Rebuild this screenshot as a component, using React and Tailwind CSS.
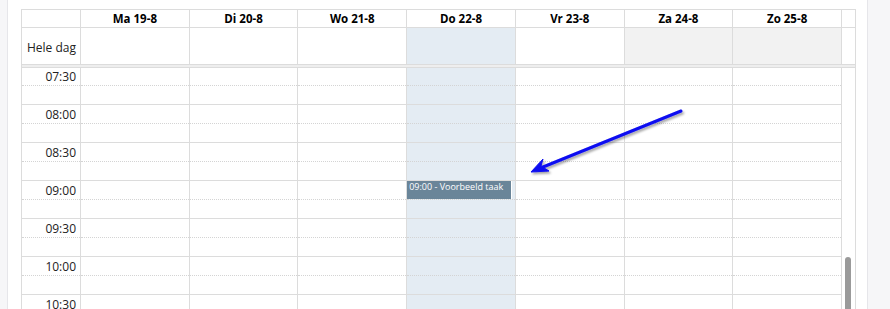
import React from 'react';

const days = ['Ma 19-8', 'Di 20-8', 'Wo 21-8', 'Do 22-8', 'Vr 23-8', 'Za 24-8', 'Zo 25-8'];
const slots = ['07:30', '08:00', '08:30', '09:00', '09:30', '10:00', '10:30', '11:00'];

function DayColumn({ index }) {
  const today = index === 3;
  return (
    <div className={`flex flex-col border-r border-[#dcdcdc] ${today ? 'bg-[#e4ecf3]' : ''}`}>
      {slots.map((s) => (
        <div key={s} className="relative h-[38px] shrink-0 border-b border-[#dcdcdc]">
          <div className="h-[19px] border-b border-dotted border-[#d4d4d4]" />
          {today && s === '09:00' && (
            <div className="absolute left-0 right-[3px] top-0 h-[18px] bg-[#6a8599] border-r border-white pl-[2px] text-[9px] leading-[12px] text-white">
              09:00 - Voorbeeld taak
            </div>
          )}
        </div>
      ))}
    </div>
  );
}

export default function App() {
  return (
    <div
      className="relative flex h-[309px] w-[890px] overflow-hidden bg-[#f6f6f8] text-[#222]"
      style={{ fontFamily: '"Open Sans", "Noto Sans", sans-serif' }}
    >
      <div className="w-2 border-r border-[#e6e6ea]" />
      <div className="w-[860px] border-r border-[#e6e6ea] bg-white pl-[13px] pt-[9px]">
        <div className="w-[835px] border-l border-r border-t border-[#dcdcdc]">
          {/* header */}
          <div className="grid grid-cols-[59px_repeat(7,1fr)_13px] border-b border-[#dcdcdc]">
            <div className="h-[17px] border-r border-[#dcdcdc]" />
            {days.map((d) => (
              <div
                key={d}
                className="flex h-[17px] items-center justify-center border-r border-[#dcdcdc] text-[11.5px] font-bold text-black"
              >
                {d}
              </div>
            ))}
            <div />
          </div>
          {/* all-day row */}
          <div className="grid grid-cols-[59px_repeat(7,1fr)_13px]">
            <div className="flex h-[36px] items-center justify-end border-r border-[#dcdcdc] pr-1 pt-[3px] text-[12px]">
              Hele dag
            </div>
            {days.map((d, i) => (
              <div
                key={d}
                className={`h-[36px] border-r border-[#dcdcdc] ${
                  i === 3 ? 'bg-[#e4ecf3]' : i >= 5 ? 'bg-[#f2f2f2]' : ''
                }`}
              />
            ))}
            <div />
          </div>
          <div className="h-[4px] border-y border-[#dcdcdc] bg-[#eeeeee]" />
          {/* time grid */}
          <div className="relative flex h-[241px] overflow-hidden">
            <div className="-mt-px grid flex-1 grid-cols-[59px_repeat(7,1fr)]">
              <div className="flex flex-col border-r border-[#dcdcdc]">
                {slots.map((s) => (
                  <div key={s} className="relative h-[38px] shrink-0 border-b border-[#dcdcdc]">
                    <div className="h-[19px] border-b border-dotted border-[#d4d4d4] pr-1 pt-[2px] text-right text-[12px] leading-[16px]">
                      {s}
                    </div>
                  </div>
                ))}
              </div>
              {days.map((d, i) => (
                <DayColumn key={d} index={i} />
              ))}
            </div>
            <div className="relative w-[13px]">
              <div className="absolute left-[3px] top-[189px] h-[80px] w-[6px] rounded-t-[3px] bg-[#9a9a9a]" />
            </div>
          </div>
        </div>
      </div>

      {/* annotation arrow */}
      <svg className="pointer-events-none absolute left-0 top-0" width="890" height="309">
        <defs>
          <filter id="sh" x="-20%" y="-20%" width="140%" height="140%">
            <feDropShadow dx="1.5" dy="2" stdDeviation="1.2" floodColor="#000" floodOpacity="0.35" />
          </filter>
        </defs>
        <g filter="url(#sh)" fill="#0a0af0" stroke="#0a0af0">
          <line x1="681" y1="111" x2="543" y2="167" strokeWidth="3" strokeLinecap="round" />
          <polygon points="531,172 543,159 541,166 549,171" strokeWidth="1" strokeLinejoin="round" />
        </g>
      </svg>
    </div>
  );
}
